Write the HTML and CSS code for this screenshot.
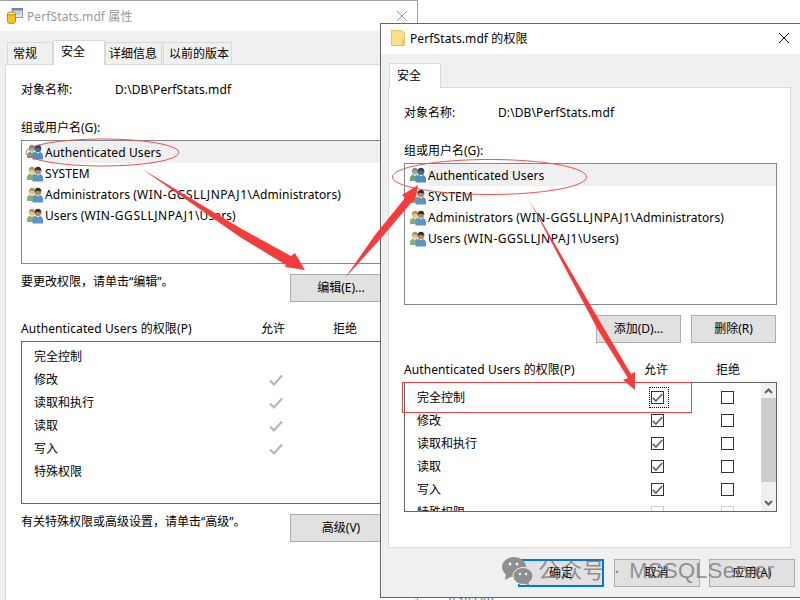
FILE: index.html
```html
<!DOCTYPE html>
<html lang="zh-CN">
<head>
<meta charset="utf-8">
<title>PerfStats.mdf 权限</title>
<link rel="stylesheet" href="styles.css">
</head>
<body>
<svg width="0" height="0" class="defs">
  <defs>
    <symbol id="users" viewBox="0 0 16 16">
      <circle cx="5" cy="4.600" r="3.200" fill="#e3c48e"/>
      <path d="M2 4.500C2 1.800 3.600.8 5 .8s3 1 3 3.700L7 4C5.800 4 4 3.600 3.600 3 3.200 3.600 3 4.200 2.800 5.600Z" fill="#a9925f"/>
      <path d="M0 14V11c0-2 2-3 3.200-3.300L5 9l1.800-1.300C8 8 9 9 9 11v3Z" fill="#86b06e"/>
      <circle cx="11" cy="5" r="3.300" fill="#b98a62"/>
      <path d="M7.700 5C7.500 2 9 .8 11 .8s3.500 1.200 3.300 4.200L13.600 4.200C12 4.400 10 4 9.300 3.400 8.800 4 8.400 4.600 8.300 5.600Z" fill="#2d3038"/>
      <path d="M5.500 15.500V12c0-2.200 2-3.600 3.600-4L11 9.500 12.900 8c1.600.4 3.100 1.800 3.100 4v3.500Z" fill="#5b93c7"/>
    </symbol>
    <symbol id="users-faded" viewBox="0 0 16 16">
      <circle cx="5" cy="4.600" r="3.200" fill="#9fb0a0"/>
      <path d="M2 4.500C2 1.800 3.600.8 5 .8s3 1 3 3.700L7 4C5.800 4 4 3.600 3.600 3 3.200 3.600 3 4.200 2.800 5.600Z" fill="#7f8f82"/>
      <path d="M0 14V11c0-2 2-3 3.200-3.300L5 9l1.800-1.300C8 8 9 9 9 11v3Z" fill="#6f9f78"/>
      <circle cx="11" cy="5" r="3.300" fill="#4f6f86"/>
      <path d="M7.700 5C7.500 2 9 .8 11 .8s3.500 1.200 3.300 4.200L13.600 4.200C12 4.400 10 4 9.300 3.400 8.800 4 8.400 4.600 8.300 5.600Z" fill="#2d4256"/>
      <path d="M5.500 15.500V12c0-2.200 2-3.600 3.600-4L11 9.500 12.900 8c1.600.4 3.100 1.800 3.100 4v3.500Z" fill="#4d8cc4"/>
    </symbol>
    <symbol id="tick" viewBox="0 0 14 14">
      <path d="M1 7.500 5 11.500 13 2.500" fill="none" stroke="currentColor" stroke-width="2"/>
    </symbol>
    <symbol id="close" viewBox="0 0 12 12">
      <path d="M1 1 11 11M11 1 1 11" fill="none" stroke="currentColor" stroke-width="1"/>
    </symbol>
  </defs>
</svg>

<div class="peek-icon"></div>
<div class="peek-text">9,192 KB</div>

<section class="window window-props">
  <header class="titlebar titlebar-props">
    <svg class="title-icon" width="16" height="16" viewBox="0 0 16 16">
      <rect x="5" y="0.500" width="10.500" height="9" fill="#dfe4ef" stroke="#8c97ad"/>
      <rect x="5" y="0" width="11" height="2.500" fill="#6f83b4"/>
      <path d="M7 4h7M7 6h7" stroke="#a9b4cb"/>
      <path d="M0.500 5.500h8v8c0 1.400-1.800 2-4 2s-4-.6-4-2Z" fill="#f5c518" stroke="#b98f10"/>
      <ellipse cx="4.500" cy="5.500" rx="4" ry="1.600" fill="#fbe58a" stroke="#b98f10"/>
    </svg>
    <h1 class="title title-inactive">PerfStats.mdf 属性</h1>
    <svg class="close close-inactive" width="12" height="12"><use href="#close"/></svg>
  </header>
  <div class="tabs tabs-props">
    <div class="tab tab-general">常规</div>
    <div class="tab tab-active tab-active-props">安全</div>
    <div class="tab tab-details">详细信息</div>
    <div class="tab tab-versions">以前的版本</div>
  </div>
  <div class="panel panel-props">
    <div class="object-row"><span class="object-label">对象名称:</span><span class="latin">D:\DB\PerfStats.mdf</span></div>
    <div class="group-label">组或用户名(G):</div>
    <div class="user-list user-list-props">
      <div class="user user-selected"><svg class="user-icon" width="16" height="16"><use href="#users-faded"/></svg><span class="user-name">Authenticated Users</span></div>
      <div class="user"><svg class="user-icon" width="16" height="16"><use href="#users"/></svg><span class="user-name">SYSTEM</span></div>
      <div class="user"><svg class="user-icon" width="16" height="16"><use href="#users"/></svg><span class="user-name"><span>Administrators (<span class="host">WIN-GGSLLJNPAJ1</span>\Administrators)</span></span></div>
      <div class="user"><svg class="user-icon" width="16" height="16"><use href="#users"/></svg><span class="user-name"><span>Users (<span class="host">WIN-GGSLLJNPAJ1</span>\Users)</span></span></div>
    </div>
    <div class="hint-row hint-row-props">
      <span class="hint">要更改权限，请单击“编辑”。</span>
      <button class="btn btn-wide">编辑(E)...</button>
    </div>
    <div class="perm-head"><span class="latin">Authenticated Users 的权限(P)</span><span class="col">允许</span><span class="col">拒绝</span></div>
    <div class="perm-box perm-box-props">
      <div class="perm-rows">
        <div class="perm perm-props"><span>完全控制</span></div>
        <div class="perm perm-props"><span>修改</span><svg class="tick-static" width="14" height="14"><use href="#tick"/></svg></div>
        <div class="perm perm-props"><span>读取和执行</span><svg class="tick-static" width="14" height="14"><use href="#tick"/></svg></div>
        <div class="perm perm-props"><span>读取</span><svg class="tick-static" width="14" height="14"><use href="#tick"/></svg></div>
        <div class="perm perm-props"><span>写入</span><svg class="tick-static" width="14" height="14"><use href="#tick"/></svg></div>
        <div class="perm perm-props"><span>特殊权限</span></div>
      </div>
    </div>
    <div class="hint-row hint-row-props">
      <span class="hint">有关特殊权限或高级设置，请单击“高级”。</span>
      <button class="btn btn-wide">高级(V)</button>
    </div>
  </div>
</section>

<section class="window window-perms">
  <header class="titlebar titlebar-perms">
    <svg class="title-icon folder-icon" width="14" height="16" viewBox="0 0 14 16">
      <path d="M.5.5h9.500l3.500 2v13H.5Z" fill="#fbe08c" stroke="#e6c25e"/>
      <rect x="11" y="9" width="2.500" height="6.500" fill="#eec866"/>
    </svg>
    <h1 class="title">PerfStats.mdf 的权限</h1>
    <svg class="close" width="12" height="12"><use href="#close"/></svg>
  </header>
  <div class="tabs tabs-perms">
    <div class="tab tab-active tab-active-perms">安全</div>
  </div>
  <div class="panel panel-perms">
    <div class="object-row"><span class="object-label">对象名称:</span><span class="latin">D:\DB\PerfStats.mdf</span></div>
    <div class="group-label">组或用户名(G):</div>
    <div class="user-list user-list-perms">
      <div class="user user-selected"><svg class="user-icon" width="16" height="16"><use href="#users-faded"/></svg><span class="user-name">Authenticated Users</span></div>
      <div class="user"><svg class="user-icon" width="16" height="16"><use href="#users"/></svg><span class="user-name">SYSTEM</span></div>
      <div class="user"><svg class="user-icon" width="16" height="16"><use href="#users"/></svg><span class="user-name"><span>Administrators (<span class="host">WIN-GGSLLJNPAJ1</span>\Administrators)</span></span></div>
      <div class="user"><svg class="user-icon" width="16" height="16"><use href="#users"/></svg><span class="user-name"><span>Users (<span class="host">WIN-GGSLLJNPAJ1</span>\Users)</span></span></div>
    </div>
    <div class="list-actions">
      <button class="btn">添加(D)...</button>
      <button class="btn">删除(R)</button>
    </div>
    <div class="perm-head"><span class="latin">Authenticated Users 的权限(P)</span><span class="col">允许</span><span class="col">拒绝</span></div>
    <div class="perm-box perm-box-perms">
      <div class="perm-rows perm-rows-scroll">
        <div class="perm perm-perms"><span>完全控制</span><span class="check check-on check-focus"><svg width="11" height="11"><use href="#tick"/></svg></span><span class="check"></span></div>
        <div class="perm perm-perms"><span>修改</span><span class="check check-on"><svg width="11" height="11"><use href="#tick"/></svg></span><span class="check"></span></div>
        <div class="perm perm-perms"><span>读取和执行</span><span class="check check-on"><svg width="11" height="11"><use href="#tick"/></svg></span><span class="check"></span></div>
        <div class="perm perm-perms"><span>读取</span><span class="check check-on"><svg width="11" height="11"><use href="#tick"/></svg></span><span class="check"></span></div>
        <div class="perm perm-perms"><span>写入</span><span class="check check-on"><svg width="11" height="11"><use href="#tick"/></svg></span><span class="check"></span></div>
        <div class="perm perm-perms"><span>特殊权限</span><span class="check check-off"></span><span class="check check-off"></span></div>
      </div>
      <div class="scrollbar">
        <svg class="scroll-arrow" width="9" height="6" viewBox="0 0 9 6"><path d="M1 5 4.500 1.500 8 5" fill="none" stroke="#606060" stroke-width="2"/></svg>
        <div class="scroll-track"><div class="scroll-thumb"></div></div>
        <svg class="scroll-arrow" width="9" height="6" viewBox="0 0 9 6"><path d="M1 1 4.500 4.500 8 1" fill="none" stroke="#606060" stroke-width="2"/></svg>
      </div>
    </div>
  </div>
  <footer class="dialog-actions">
    <button class="btn btn-footer btn-primary">确定</button>
    <button class="btn btn-footer">取消</button>
    <button class="btn btn-footer">应用(A)</button>
  </footer>
</section>

<svg class="annotations" width="800" height="600" viewBox="0 0 800 600">
  <ellipse cx="102.500" cy="152.500" rx="76.500" ry="13.500" fill="none" stroke="#f05050"/>
  <ellipse cx="489.500" cy="177" rx="97" ry="17.500" fill="none" stroke="#f05050"/>
  <rect x="402.500" y="382.500" width="289" height="30" fill="none" stroke="#f44040"/>
  <polygon points="142,169 240,228 291,256 295,253 305,270 285,267 286,265 240,237" fill="#f53c3c"/>
  <polygon points="345,278 375,235 405,198 402,195 418,185 415,200 411,203 383,236" fill="#f53c3c"/>
  <polygon points="528,198 598,330 628,378 623,380 635,390 635,372 631,374 605,330" fill="#f53c3c"/>
</svg>

<div class="watermark">
  <svg class="wechat" width="31" height="30" viewBox="0 0 31 30">
    <ellipse cx="12" cy="11" rx="12" ry="10" fill="#8f8f8f"/>
    <path d="M4 17 3 24 10 20Z" fill="#8f8f8f"/>
    <ellipse cx="21" cy="20" rx="10" ry="8.500" fill="#8f8f8f" stroke="#efefef"/>
    <path d="M26 26 28 30 22 27Z" fill="#8f8f8f"/>
    <circle cx="8" cy="8" r="1.500" fill="#efefef"/><circle cx="15" cy="8" r="1.500" fill="#efefef"/>
    <circle cx="18" cy="18" r="1.300" fill="#efefef"/><circle cx="24" cy="18" r="1.300" fill="#efefef"/>
  </svg>
  <span>公众号 · MSSQLServer</span>
</div>
</body>
</html>
```
FILE: styles.css
```css
* { box-sizing: border-box; }
html, body { margin: 0; padding: 0; }
body {
  position: relative;
  width: 800px;
  height: 600px;
  overflow: hidden;
  background: #fff;
  color: #000;
  font: 12px/16px "Noto Sans", "Noto Sans CJK SC", sans-serif;
}
.defs { position: absolute; }
.latin { letter-spacing: .1px; }

.window {
  position: absolute;
  display: flex;
  flex-direction: column;
  background: #f0f0f0;
}
.window-props {
  left: 0; top: 0; width: 418px; height: 600px;
  overflow: hidden;
  border-top: 1px solid #a0a0a0;
  border-right: 1px solid #a0a0a0;
}
.window-perms {
  left: 380px; top: 23px; width: 430px; height: 575px;
  border: 1px solid #666;
}

.titlebar { display: flex; align-items: center; background: #fff; height: 30px; flex: none; }
.titlebar-props { padding: 0 9px 0 7px; }
.titlebar-perms { padding: 0 19px 2px 10px; }
.title { margin: 0; padding-top: 2px; font-size: 12px; font-weight: 400; flex: 1; letter-spacing: .1px; }
.title-inactive { color: #999; }
.title-icon { margin-right: 4px; flex: none; }
.folder-icon { margin-right: 5px; }
.close { color: #111; }
.close-inactive { color: #999; }

.tabs { display: flex; align-items: flex-end; flex: none; height: 33px; position: relative; z-index: 1; }
.tabs-props { padding-left: 7px; }
.tabs-perms { padding-left: 8px; }
.tab {
  height: 22px;
  border: 1px solid #d9d9d9;
  border-bottom: 0;
  background: #f0f0f0;
  display: flex;
  align-items: center;
  margin-right: 1px;
}
.tab-general { width: 46px; margin-right: 0; padding-left: 5px; }
.tab-details { width: 57px; padding-left: 3px; }
.tab-versions { width: 69px; padding-left: 5px; }
.tab-active {
  height: 25px;
  background: #fff;
  margin-bottom: -1px;
  padding-bottom: 3px;
  padding-left: 7px;
}
.tab-active-props { width: 52px; margin-right: 0; }
.tab-active-perms { width: 52px; padding-bottom: 0; }

.panel {
  background: #fff;
  border: 1px solid #d9d9d9;
  padding: 17px 15px 0;
  flex: none;
}
.panel-props { margin-left: 5px; width: 410px; height: 560px; }
.panel-perms { margin-left: 7px; width: 403px; height: 461px; }

.object-row { display: flex; height: 16px; }
.object-label { width: 94px; flex: none; }
.group-label { margin-top: 22px; }

.user-list { margin-top: 4px; border: 1px solid #828790; background: #fff; width: 373px; letter-spacing: .1px; }
.user-list-props { height: 124px; }
.user-list-perms { height: 142px; }
.user { display: flex; align-items: center; height: 21px; padding-left: 5px; }
.user-selected { height: 22px; }
.user-icon { flex: none; margin-right: 2px; }
.user-name { flex: 1; height: 100%; display: flex; align-items: center; white-space: nowrap; }
.user-selected .user-name { background: #f0f0f0; padding-top: 2px; }
.host { letter-spacing: .55px; }

.hint-row { display: flex; justify-content: space-between; margin-top: 10px; }
.hint-row-props { width: 371px; }

.btn {
  display: block;
  width: 85px;
  height: 28px;
  padding: 0;
  border: 1px solid #adadad;
  background: #e1e1e1;
  color: #000;
  font: inherit;
  text-align: center;
}
.btn-wide { width: 102px; }
.btn-footer { width: 86px; }
.btn-primary { border: 2px solid #0078d7; }

.list-actions { display: flex; justify-content: flex-end; gap: 10px; margin-top: 10px; width: 372px; }

.perm-head {
  display: grid;
  grid-template-columns: 1fr 72px 72px;
  margin-top: 19px;
  padding-right: 13px;
  width: 373px;
  height: 16px;
}
.col { text-align: center; }

.perm-box { margin-top: 4px; border: 1px solid #666; width: 373px; display: flex; }
.perm-box-props { height: 163px; }
.perm-box-perms { height: 130px; overflow: hidden; }
.perm-rows { flex: 1; padding: 3px 0 0 12px; }
.perm-rows-scroll { min-width: 0; }
.perm { display: grid; height: 23px; align-items: center; justify-items: center; }
.perm > span:first-child { justify-self: start; }
.perm-props { grid-template-columns: 1fr 14px; padding-right: 110px; }
.perm-perms { grid-template-columns: 1fr 70px 70px; margin-right: -1px; }
.tick-static { color: #b4b4b4; }

.check {
  position: relative;
  width: 13px;
  height: 13px;
  border: 1px solid #333;
  display: flex;
  align-items: center;
  justify-content: center;
  background: #fff;
}
.check-on { color: #606060; }
.check-off { border-color: #cfcfcf; }
.check-focus::after {
  content: "";
  position: absolute;
  inset: -5px -6px -5px -3px;
  border: 1px dotted #000;
}

.scrollbar {
  position: relative;
  width: 15px;
  flex: none;
  background: #f0f0f0;
  display: flex;
  flex-direction: column;
  align-items: center;
}
.scroll-arrow { flex: none; margin: 5px 0; }
.scroll-track { flex: 1; width: 100%; margin-top: -1px; margin-bottom: 8px; }
.scroll-thumb { height: 84px; background: #cdcdcd; }

.dialog-actions { display: flex; gap: 9.5px; padding: 11px 0 0 137px; }

.annotations { position: absolute; left: 0; top: 0; pointer-events: none; }

.watermark {
  position: absolute;
  left: 502px;
  top: 556px;
  display: flex;
  align-items: center;
  gap: 5px;
  color: rgba(110, 110, 110, .72);
  font: 22px/30px "Liberation Sans", "Noto Sans CJK SC", sans-serif;
  white-space: nowrap;
  letter-spacing: .3px;
  word-spacing: 2px;
}
.wechat { flex: none; }

.peek-text { position: absolute; left: 449px; top: 593px; font-size: 11px; color: #666; }
.peek-icon { position: absolute; left: 407px; top: 597px; width: 9px; height: 3px; border: 1px solid #bbb; border-bottom: 0; }
```
